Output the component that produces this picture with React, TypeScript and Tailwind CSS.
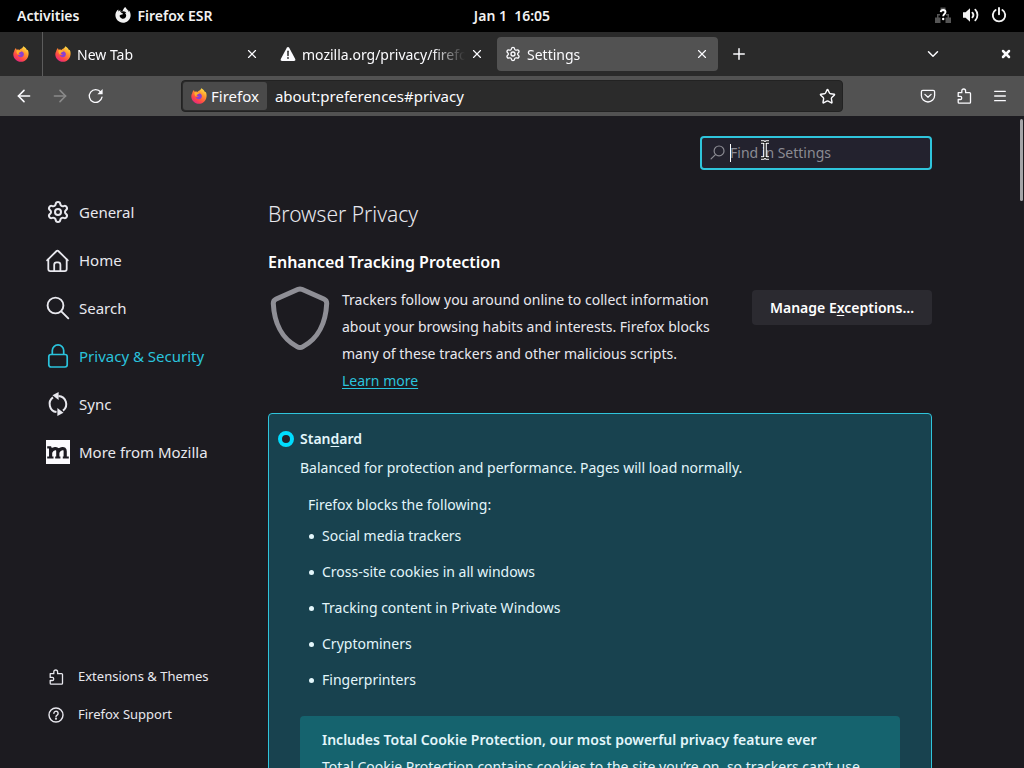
import React, { useState } from 'react';
import { Settings as GearIcon, ArrowLeft, ArrowRight, X, Plus, ChevronDown, Star, Menu } from 'lucide-react';
import { FaFirefoxBrowser } from 'react-icons/fa';

type IconProps = { className?: string };

const FirefoxLogo: React.FC<IconProps> = ({ className }) => (
  <svg viewBox="0 0 16 16" className={className} aria-hidden="true">
    <defs>
      <linearGradient id="fx-body" x1="0.85" y1="0" x2="0.2" y2="1">
        <stop offset="0" stopColor="#fff04a" />
        <stop offset="0.35" stopColor="#ff9a2e" />
        <stop offset="0.7" stopColor="#ff4a45" />
        <stop offset="1" stopColor="#e0208a" />
      </linearGradient>
    </defs>
    <path
      d="M1.2 5.2C1.6 3.8 2.3 2.7 3 2.1c0 .8.3 1.3.7 1.7.9-.3 1.9-.2 2.6.1C7 3.1 7.8 2.7 8.5 2.6 9.5 1.9 10 .9 10.3.2c2.2 1.2 3.3 2.6 3.7 4 .4-.1.6-.3.7-.5 1 2 1.2 4.3.5 6.500C14.2 13.5 11.3 15.8 8 15.8c-4.3 0-7.7-3.4-7.7-7.6 0-1.1.3-2.1.9-3z"
      fill="url(#fx-body)"
    />
    <path d="M5.5 6.1c1.500-1.400 4.600-.9 5.300 1.500.5 2-1 3.700-2.900 3.700-1.700 0-2.900-1.100-3-2.500 1 .6 2.200.4 3-.4-1.200.1-1.900-.5-2.100-1.300z" fill="#8a3fd1" />
    <path d="M3.6 4.2c1-.3 1.900-.1 2.700.4l1.900.3c-.2.9-1.400 1-1.700 1.700-.8.300-1.400 1.200-.8 2.100C3.9 8.300 3 6.200 3.600 4.200z" fill="#ffb02e" />
  </svg>
);

const WarningIcon: React.FC<IconProps> = ({ className }) => (
  <svg viewBox="0 0 16 16" className={className} aria-hidden="true">
    <path d="M8 .9c.5 0 .9.3 1.200.8l6 11.300c.5 1-.2 2-1.200 2H2c-1 0-1.700-1-1.200-2l6-11.300C7.100 1.200 7.500.9 8 .9z" fill="#fbfbfe" />
    <path d="M8 5.300v4.200" stroke="#2a2a2a" strokeWidth="1.5" strokeLinecap="round" />
    <circle cx="8" cy="12" r="0.9" fill="#2a2a2a" />
  </svg>
);

const ReloadIcon: React.FC<IconProps> = ({ className }) => (
  <svg viewBox="0 0 16 16" className={className} fill="none" stroke="currentColor" strokeWidth="1.3" strokeLinecap="round" aria-hidden="true">
    <path d="M14 9.200A6.400 6.400 0 1 1 12.700 4" />
    <path d="M14.600 1v5.200H9.400z" fill="currentColor" stroke="none" />
  </svg>
);

const PocketIcon: React.FC<IconProps> = ({ className }) => (
  <svg viewBox="0 0 16 16" className={className} fill="none" stroke="currentColor" strokeWidth="1.3" strokeLinecap="round" strokeLinejoin="round" aria-hidden="true">
    <path d="M2.800 2.300h10.400c.8 0 1.400.6 1.400 1.400v3.700a6.600 6.600 0 0 1-13.200 0V3.700c0-.8.6-1.400 1.400-1.400z" />
    <path d="M4.900 6.400 8 9.300l3.100-2.900" />
  </svg>
);

const PuzzleIcon: React.FC<IconProps> = ({ className }) => (
  <svg viewBox="0 0 16 16" className={className} fill="none" stroke="currentColor" strokeWidth="1.3" strokeLinejoin="round" aria-hidden="true">
    <path d="M2.200 4.700h3.600V2.900a1.900 1.900 0 0 1 3.800 0v1.800h4c.5 0 .9.4.9.9v8.600c0 .5-.4.9-.9.9H3.100c-.5 0-.9-.4-.9-.9v-2.700h2a1.500 1.500 0 0 0 0-3.100h-2z" />
  </svg>
);

const HomeIcon: React.FC<IconProps> = ({ className }) => (
  <svg viewBox="0 0 24 24" className={className} fill="none" stroke="currentColor" strokeWidth="1.8" strokeLinecap="round" strokeLinejoin="round" aria-hidden="true">
    <path d="M1.100 12.300 10.600 3a1.200 1.200 0 0 1 1.700 0l9.500 9.300" />
    <path d="M2.300 11.500v9.500c0 1.200.9 2.100 2.100 2.100h14.200c1.200 0 2.100-.9 2.100-2.100v-9.500" />
    <path d="M8.200 22.800v-6c0-1.500 1-2.500 2.300-2.500h1.600c1.300 0 2.300 1 2.300 2.500v6" />
  </svg>
);

const SearchIcon: React.FC<IconProps> = ({ className }) => (
  <svg viewBox="0 0 24 24" className={className} fill="none" stroke="currentColor" strokeWidth="1.9" strokeLinecap="round" aria-hidden="true">
    <circle cx="9.5" cy="9.500" r="7.900" />
    <path d="m15.300 15.300 7 7" />
  </svg>
);

const LockIcon: React.FC<IconProps> = ({ className }) => (
  <svg viewBox="0 0 24 24" className={className} fill="none" stroke="currentColor" strokeWidth="1.7" aria-hidden="true">
    <rect x="2.800" y="10.500" width="18.400" height="12.500" rx="2.200" />
    <path d="M6.300 10.500V6.600a5.700 5.700 0 0 1 11.400 0v3.900" />
  </svg>
);

const SyncIcon: React.FC<IconProps> = ({ className }) => (
  <svg viewBox="0 0 24 24" className={className} fill="none" stroke="currentColor" strokeWidth="2" aria-hidden="true">
    <path d="M10.500 20.100A8.200 8.200 0 0 1 7 5.400" />
    <path d="M12.500 3.900A8.200 8.200 0 0 1 17 18.600" />
    <path d="M6.500 3.200 12.600 0v8z" fill="currentColor" stroke="none" />
    <path d="M17.500 20.800 11.400 24v-8z" fill="currentColor" stroke="none" />
  </svg>
);

const MozillaIcon: React.FC<IconProps> = ({ className }) => (
  <svg viewBox="0 0 24 24" className={className} aria-hidden="true">
    <rect width="24" height="24" fill="#fbfbfe" />
    <g fill="none" stroke="#1c1b22">
      <path d="M4.600 18V7.500M11.800 18v-6.800c0-4-5.200-3.200-7 .8M19.200 18v-6.800c0-4-5.400-3.200-7.200.8" strokeWidth="3.2" />
      <path d="M1.200 7.300h4M1.200 17.500h6.300M9.200 17.500h5.200M16.800 17.500h6" strokeWidth="2.2" />
    </g>
  </svg>
);

const HelpIcon: React.FC<IconProps> = ({ className }) => (
  <svg viewBox="0 0 16 16" className={className} fill="none" stroke="currentColor" strokeWidth="1.4" strokeLinecap="round" aria-hidden="true">
    <circle cx="8" cy="8" r="7" />
    <path d="M5.900 6.300a2.100 2.100 0 1 1 3.200 1.800c-.7.400-1.100.7-1.100 1.400" />
    <circle cx="8" cy="11.700" r="0.400" fill="currentColor" />
  </svg>
);

const ShieldIcon: React.FC<IconProps> = ({ className }) => (
  <svg viewBox="0 0 64 64" className={className} fill="none" stroke="#8f8f96" strokeWidth="5" strokeLinejoin="round" aria-hidden="true">
    <path d="M30.200 3.300a5 5 0 0 1 3.600 0l22 9.700c2 .9 3 2.500 2.900 4.600C57.800 36 50.500 52.500 35 60.600a6 6 0 0 1-6 0C13.500 52.500 6.200 36 5.300 17.600c-.1-2.100.9-3.700 2.900-4.600z" />
  </svg>
);

const NetworkIcon: React.FC<IconProps> = ({ className }) => (
  <svg viewBox="0 0 16 16" className={className} aria-hidden="true">
    <path d="M5.500.5h5v4h-5zM0 10.500h5.500V16H0zM10.500 10.500H16V16h-5.500zM2 7h3v1.500H3.500v2H2zM11 7h3v3.500h-1.500v-2H11z" fill="#555" />
    <path d="M5.700 5.200C5.900 3.700 6.900 3 8.100 3c1.400 0 2.400.8 2.400 2.100 0 1.900-2.300 2-2.300 4.100" fill="none" stroke="#fff" strokeWidth="1.9" />
    <circle cx="8.200" cy="12" r="1.200" fill="#fff" />
  </svg>
);

const VolumeIcon: React.FC<IconProps> = ({ className }) => (
  <svg viewBox="0 0 16 16" className={className} fill="none" stroke="#f2f2f2" strokeWidth="1.8" strokeLinecap="round" aria-hidden="true">
    <path d="M0 5.300h2.600L7 1.200v13.600l-4.400-4.100H0z" fill="#f2f2f2" stroke="none" />
    <path d="M9.400 5.600a3.600 3.600 0 0 1 0 4.800M12.300 2.700a7.600 7.600 0 0 1 0 10.600" />
  </svg>
);

const PowerIcon: React.FC<IconProps> = ({ className }) => (
  <svg viewBox="0 0 16 16" className={className} fill="none" stroke="#f2f2f2" strokeWidth="1.9" strokeLinecap="round" aria-hidden="true">
    <path d="M4.600 3A6.200 6.200 0 1 0 11.400 3M8 1v6.300" />
  </svg>
);

const CursorIcon: React.FC<IconProps> = ({ className }) => (
  <svg viewBox="0 0 10 20" className={className} fill="none" aria-hidden="true">
    <path d="M1 2h2.500L5 3l1.500-1H9M5 3v14M1 18h2.500L5 17l1.500 1H9" stroke="#fff" strokeWidth="3.6" />
    <path d="M1 2h2.500L5 3l1.500-1H9M5 3v14M1 18h2.500L5 17l1.500 1H9" stroke="#111" strokeWidth="1.4" />
  </svg>
);

const TopBar: React.FC = () => (
  <header className="grid h-8 shrink-0 grid-cols-[1fr_auto_1fr] items-center bg-black px-[17px] pb-[2px] text-[14px] font-semibold text-[#f2f2f2]">
    <div className="flex items-center gap-9">
      <button>Activities</button>
      <button className="flex items-center gap-[6px]">
        <FaFirefoxBrowser className="h-4 w-4" />
        Firefox ESR
      </button>
    </div>
    <button className="whitespace-pre">Jan 1  16:05</button>
    <div className="flex items-center justify-end gap-3">
      <NetworkIcon className="h-4 w-4" />
      <VolumeIcon className="h-4 w-4" />
      <PowerIcon className="h-4 w-4" />
    </div>
  </header>
);

const TabStrip: React.FC = () => {
  const [activeTab, setActiveTab] = useState('settings');

  const tabs = [
    { id: 'new', label: 'New Tab', icon: FirefoxLogo },
    { id: 'mozilla', label: 'mozilla.org/privacy/firefox', icon: WarningIcon },
    { id: 'settings', label: 'Settings', icon: GearIcon },
  ];

  return (
    <div className="flex h-11 shrink-0 items-center bg-[#2a2a2a] text-[#fbfbfe]">
      <button aria-label="Firefox View" className="flex h-full w-[43px] shrink-0 items-center justify-center border-r border-[#5c5c5c]">
        <FirefoxLogo className="h-4 w-4" />
      </button>
      <div className="ml-1 flex gap-1">
        {tabs.map((tab) => {
          const Icon = tab.icon;
          return (
            <div
              key={tab.id}
              className={`flex h-[34px] w-[221px] items-center rounded px-2 ${activeTab === tab.id ? 'bg-[#525252]' : ''}`}
            >
              <button onClick={() => setActiveTab(tab.id)} className="flex min-w-0 flex-1 items-center gap-[6px]">
                <Icon className="h-4 w-4 shrink-0" />
                <span className="min-w-0 flex-1 overflow-hidden text-left text-[14px] whitespace-nowrap [mask-image:linear-gradient(to_right,black_80%,transparent)]">
                  {tab.label}
                </span>
              </button>
              <button aria-label="Close tab" className="ml-1 flex h-4 w-4 shrink-0 items-center justify-center">
                <X className="h-[14px] w-[14px]" strokeWidth={2} />
              </button>
            </div>
          );
        })}
      </div>
      <button aria-label="New tab" className="ml-3">
        <Plus className="h-[18px] w-[18px]" strokeWidth={2} />
      </button>
      <div className="ml-auto flex items-center gap-[58px] pr-3">
        <button aria-label="List all tabs">
          <ChevronDown className="h-[18px] w-[18px]" strokeWidth={2} />
        </button>
        <button aria-label="Close window">
          <X className="h-3 w-3" strokeWidth={5} />
        </button>
      </div>
    </div>
  );
};

const Toolbar: React.FC = () => (
  <div className="flex h-10 shrink-0 items-center bg-[#525252] px-4 text-[#fbfbfe]">
    <div className="flex w-[165px] items-center gap-5">
      <button aria-label="Back"><ArrowLeft className="h-4 w-4 scale-120" strokeWidth={2} /></button>
      <button aria-label="Forward" className="text-[#8a8a8a]"><ArrowRight className="h-4 w-4 scale-120" strokeWidth={2} /></button>
      <button aria-label="Reload"><ReloadIcon className="h-4 w-4" /></button>
    </div>
    <div className="flex h-8 flex-1 items-center rounded border border-[#222] bg-[#2b2b2b] p-px pr-[6px]">
      <button className="flex h-7 items-center gap-1 rounded-[3px] bg-[#4a4a4a] px-2 text-[15px]">
        <FirefoxLogo className="h-4 w-4" />
        Firefox
      </button>
      <input
        aria-label="Address"
        defaultValue="about:preferences#privacy"
        className="min-w-0 flex-1 bg-transparent px-2 text-[15px] outline-none"
      />
      <button aria-label="Bookmark this page"><Star className="h-[17px] w-[17px]" strokeWidth={2} /></button>
    </div>
    <div className="flex w-[165px] items-center justify-end gap-5">
      <button aria-label="Save to Pocket"><PocketIcon className="h-4 w-4" /></button>
      <button aria-label="Extensions"><PuzzleIcon className="h-4 w-4" /></button>
      <button aria-label="Open menu"><Menu className="h-4 w-4" strokeWidth={2} /></button>
    </div>
  </div>
);

const Sidebar: React.FC = () => {
  const [category, setCategory] = useState('privacy');

  const categories = [
    { id: 'general', label: 'General', icon: GearIcon },
    { id: 'home', label: 'Home', icon: HomeIcon },
    { id: 'search', label: 'Search', icon: SearchIcon },
    { id: 'privacy', label: 'Privacy & Security', icon: LockIcon },
    { id: 'sync', label: 'Sync', icon: SyncIcon },
    { id: 'more', label: 'More from Mozilla', icon: MozillaIcon },
  ];

  return (
    <aside className="flex w-[268px] shrink-0 flex-col justify-between pt-[72px] pb-[34px] pl-[46px]">
      <nav>
        {categories.map((item) => {
          const Icon = item.icon;
          return (
            <button
              key={item.id}
              onClick={() => setCategory(item.id)}
              className={`flex h-12 items-center gap-[9px] text-[15px] ${category === item.id ? 'text-[#2ac3dc]' : ''}`}
            >
              <Icon className="h-6 w-6" />
              {item.label}
            </button>
          );
        })}
      </nav>
      <div className="text-[13px]">
        <a href="#addons" className="flex h-[38px] items-center gap-[14px] pl-[2px]">
          <PuzzleIcon className="h-4 w-4" />
          Extensions &amp; Themes
        </a>
        <a href="#support" className="flex h-[38px] items-center gap-[14px] pl-[2px]">
          <HelpIcon className="h-4 w-4" />
          Firefox Support
        </a>
      </div>
    </aside>
  );
};

const blocked = [
  'Social media trackers',
  'Cross-site cookies in all windows',
  'Tracking content in Private Windows',
  'Cryptominers',
  'Fingerprinters',
];

const PrivacyPane: React.FC = () => (
  <main className="w-full max-w-[664px] pt-5">
    <div className="relative ml-auto h-[34px] w-[232px]">
      <input
        type="text"
        aria-label="Find in Settings"
        placeholder="Find in Settings"
        className="h-full w-full rounded border-2 border-[#2fc5dc] bg-[#23222e] pr-2 pb-[2px] pl-[28px] text-[14px] outline-none placeholder:text-[#8b8b93]"
      />
      <SearchIcon className="absolute top-[9px] left-[10px] h-[15px] w-[15px] -scale-x-100 text-[#8b8b93]" />
      <span className="absolute top-[8px] left-[30px] h-[18px] w-px bg-white" />
      <CursorIcon className="absolute top-1 left-[60px] h-5 w-[10px]" />
    </div>

    <h1 className="mt-7 text-[21px] leading-8 font-light">Browser Privacy</h1>

    <h2 className="mt-5 text-[16px] leading-6 font-semibold text-white">Enhanced Tracking Protection</h2>
    <div className="mt-3 flex items-start">
      <ShieldIcon className="h-16 w-16 shrink-0" />
      <p className="ml-[10px] w-[385px] text-[14px] leading-[27px]">
        Trackers follow you around online to collect information about your browsing habits and interests. Firefox blocks
        many of these trackers and other malicious scripts.
        <br />
        <a href="#learn" className="text-[#2ac3dc] underline underline-offset-2">Learn more</a>
      </p>
      <button className="mt-1 ml-auto h-[35px] w-[180px] rounded bg-[#2b2a30] text-[14px] font-semibold text-white">
        Manage E<span className="underline underline-offset-2">x</span>ceptions…
      </button>
    </div>

    <section className="mt-[19px] rounded border border-[#2fc5dc] bg-[#18424f] px-[31px] pt-[13px] pb-8 text-[14px] text-[#e3f6fb]">
      <label className="-ml-[22px] flex items-center gap-[6px] leading-6 font-semibold">
        <input
          type="radio"
          name="tracking"
          defaultChecked
          className="h-4 w-4 appearance-none rounded-full border-4 border-[#00ddff] bg-[#23222b]"
        />
        <span>Stan<span className="underline underline-offset-2">d</span>ard</span>
      </label>
      <p className="mt-[5px] leading-6">Balanced for protection and performance. Pages will load normally.</p>
      <p className="mt-[13px] ml-2 leading-6">Firefox blocks the following:</p>
      <ul className="ml-[9px]">
        {blocked.map((name) => (
          <li key={name} className="flex h-9 items-center gap-2">
            <span className="mt-[2px] h-[5px] w-[5px] rounded-full bg-[#e3f6fb]" />
            {name}
          </li>
        ))}
      </ul>
      <div className="mt-[19px] rounded bg-[#15636e] px-[22px] py-[10px] leading-[27px]">
        <h3 className="font-semibold">Includes Total Cookie Protection, our most powerful privacy feature ever</h3>
        <p>Total Cookie Protection contains cookies to the site you’re on, so trackers can’t use them to follow you between sites.</p>
      </div>
    </section>
  </main>
);

const App: React.FC = () => (
  <div className="flex h-screen flex-col overflow-hidden bg-[#1c1b20] font-['Noto_Sans',sans-serif] text-[#e8e8ee]">
    <TopBar />
    <TabStrip />
    <Toolbar />
    <div className="relative flex min-h-0 flex-1 overflow-hidden">
      <Sidebar />
      <PrivacyPane />
      <div className="absolute top-[3px] right-px h-[82px] w-[3px] rounded-full bg-[#a5a5a8]" />
    </div>
  </div>
);

export default App;
